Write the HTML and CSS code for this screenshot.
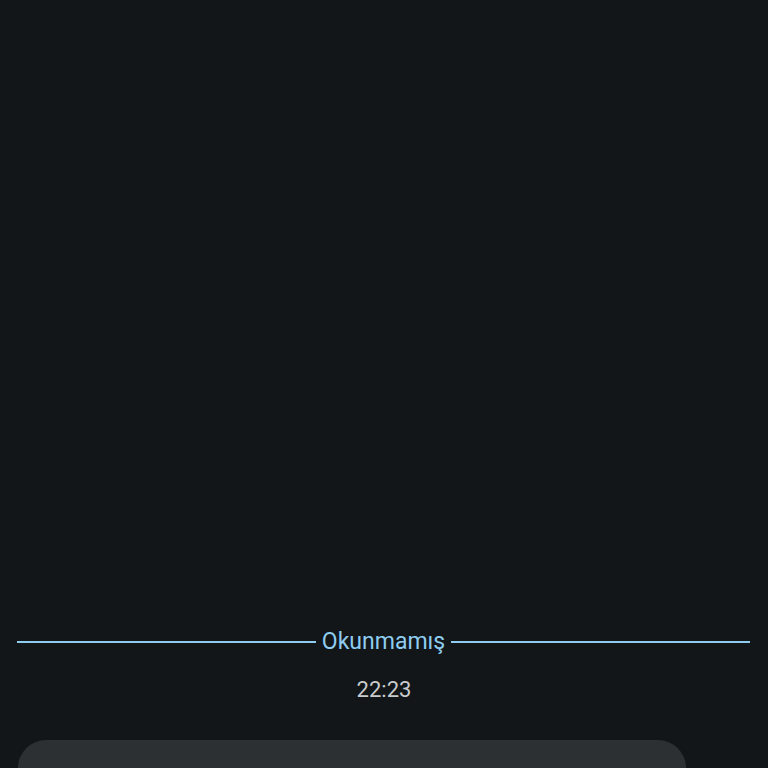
FILE: index.html
```html
<!DOCTYPE html>
<html lang="tr">
<head>
<meta charset="utf-8">
<link rel="stylesheet" href="styles.css">
</head>
<body>
<main class="chat">
  <div class="divider">
    <span class="divider-line"></span>
    <span class="divider-label">Okunmamış</span>
    <span class="divider-line"></span>
  </div>
  <div class="time">22:23</div>
  <div class="bubble"></div>
</main>
</body>
</html>
```
FILE: styles.css
```css
html, body {
  margin: 0;
  padding: 0;
  background: #121619;
  height: 100%;
  overflow: hidden;
}
.chat {
  display: flex;
  flex-direction: column;
  box-sizing: border-box;
  height: 100vh;
  padding-top: 628px;
  font-family: Roboto, "Noto Sans", sans-serif;
}
.divider {
  display: flex;
  align-items: center;
  gap: 6px;
  padding: 0 18px 0 17px;
  height: 28px;
}
.divider-line {
  flex: 1;
  height: 2px;
  background: #8ecdf0;
}
.divider-label {
  color: #8ecdf0;
  font-size: 23px;
  line-height: 28px;
}
.time {
  margin-top: 19px;
  text-align: center;
  color: #c9cbcd;
  font-size: 22px;
  line-height: 30px;
}
.bubble {
  flex: 1;
  margin: 35px 82px 0 18px;
  background: #2c3033;
  border-radius: 42px 42px 0 0;
}
```
